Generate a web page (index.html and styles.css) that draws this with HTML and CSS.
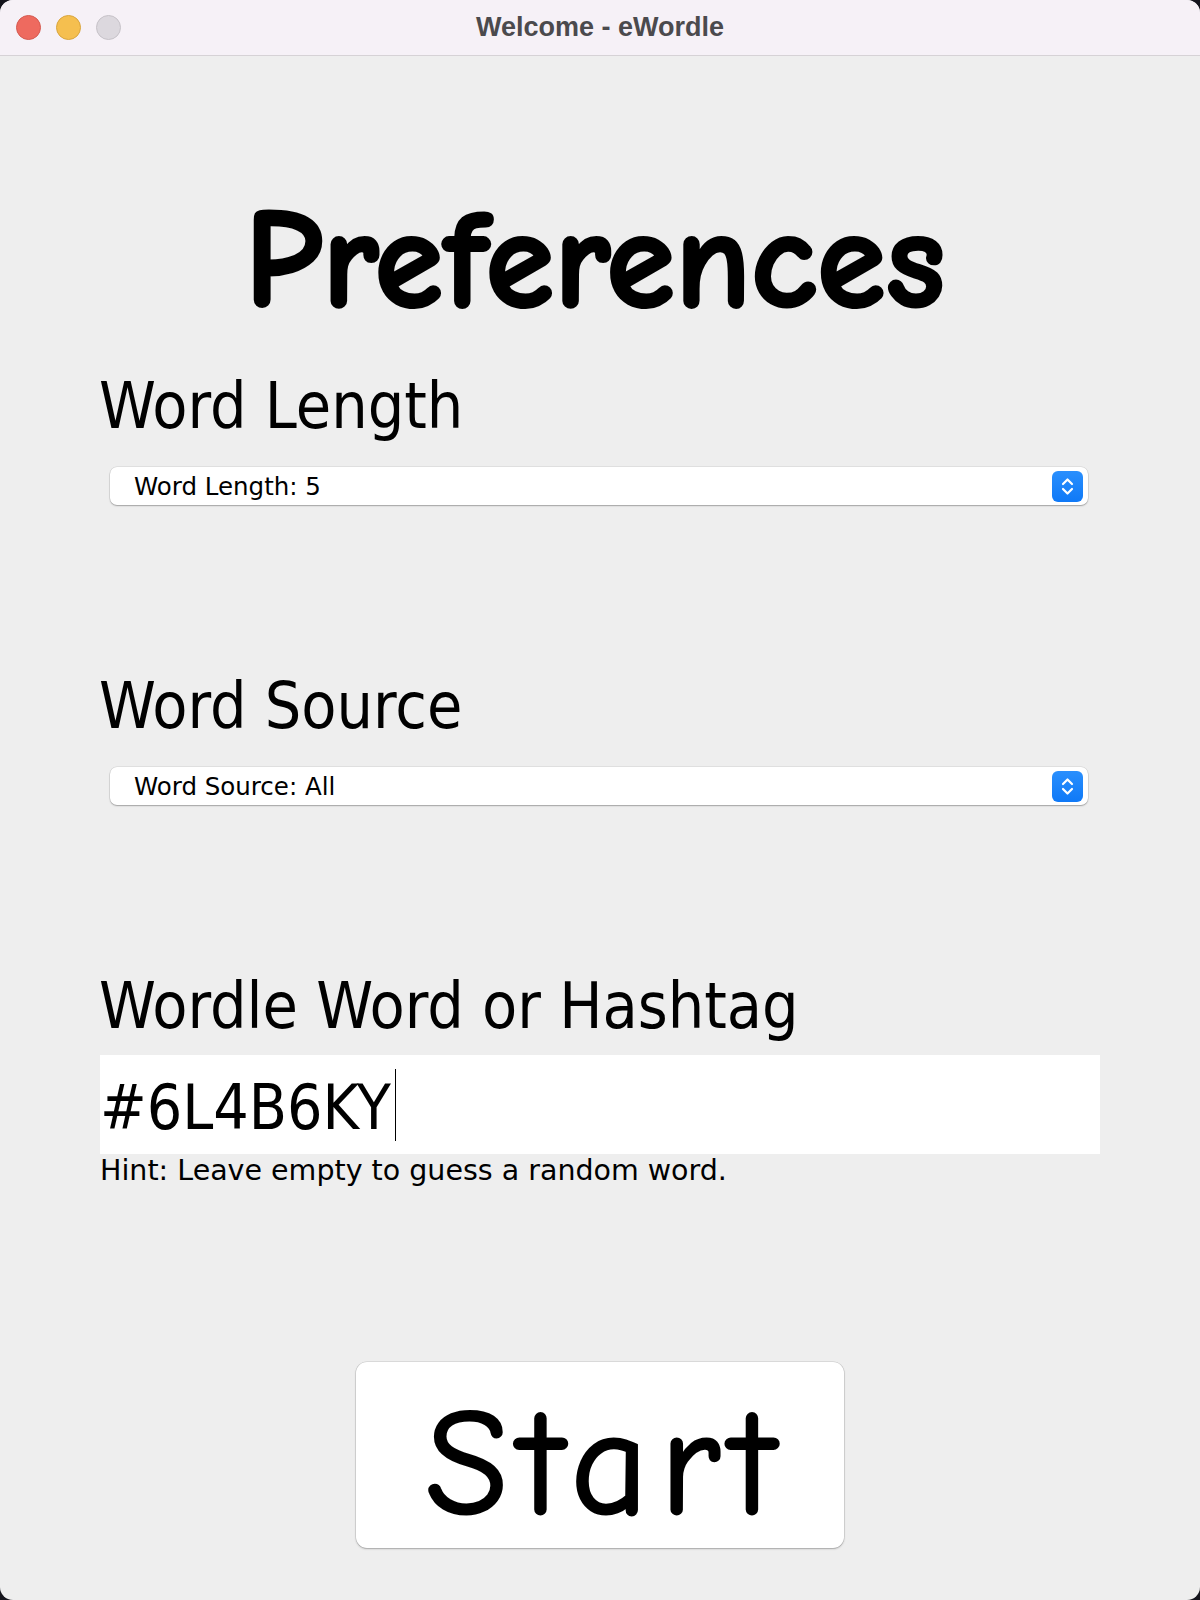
FILE: index.html
```html
<!DOCTYPE html>
<html lang="en">
<head>
<meta charset="utf-8">
<title>Welcome - eWordle</title>
<link rel="stylesheet" href="styles.css">
</head>
<body>
<div class="window">
  <header class="titlebar">
    <div class="lights">
      <span class="light light-red"></span>
      <span class="light light-yellow"></span>
      <span class="light light-gray"></span>
    </div>
    <div class="title">Welcome - eWordle</div>
  </header>
  <main class="content">
    <h1 class="heading">Preferences</h1>

    <section class="group">
      <div class="label">Word Length</div>
      <div class="combo">
        <span class="combo-text">Word Length: 5</span>
        <span class="stepper">
          <svg width="31" height="31" viewBox="0 0 31 31"><path d="M11 13 L15.5 8.5 L20 13 M11 18 L15.5 22.5 L20 18" fill="none" stroke="#fff" stroke-width="2.2" stroke-linecap="round" stroke-linejoin="round"/></svg>
        </span>
      </div>
    </section>

    <section class="group">
      <div class="label">Word Source</div>
      <div class="combo">
        <span class="combo-text">Word Source: All</span>
        <span class="stepper">
          <svg width="31" height="31" viewBox="0 0 31 31"><path d="M11 13 L15.5 8.5 L20 13 M11 18 L15.5 22.5 L20 18" fill="none" stroke="#fff" stroke-width="2.2" stroke-linecap="round" stroke-linejoin="round"/></svg>
        </span>
      </div>
    </section>

    <section class="group group-field">
      <div class="label">Wordle Word or Hashtag</div>
      <div class="field"><span class="field-text">#6L4B6KY</span><span class="caret"></span></div>
      <div class="hint">Hint: Leave empty to guess a random word.</div>
    </section>

    <div class="actions">
      <button class="start">Start</button>
    </div>
  </main>
</div>
</body>
</html>
```

FILE: styles.css
```css
html, body {
  margin: 0;
  padding: 0;
  background: #15151d;
}
.window {
  width: 1200px;
  height: 1600px;
  border-radius: 13px;
  overflow: hidden;
  background: #eeeeee;
  display: flex;
  flex-direction: column;
}
.titlebar {
  height: 55px;
  background: #f6f1f7;
  border-bottom: 1px solid #d6d2d6;
  display: flex;
  align-items: center;
  position: relative;
}
.lights {
  display: flex;
  gap: 15px;
  padding-left: 16px;
}
.light {
  width: 25px;
  height: 25px;
  border-radius: 50%;
  box-sizing: border-box;
}
.light-red { background: #ee6a5f; border: 1px solid #d55a50; }
.light-yellow { background: #f5bf4f; border: 1px solid #d9a53d; }
.light-gray { background: #dcd8de; border: 1px solid #c6c2c8; }
.title {
  position: absolute;
  left: 0;
  right: 0;
  top: 0;
  height: 55px;
  line-height: 55px;
  text-align: center;
  font-family: "Liberation Sans", Arial, sans-serif;
  font-weight: bold;
  font-size: 27px;
  color: #4b4a4d;
}
.content {
  flex: 1;
  padding: 0 100px;
  font-family: "DejaVu Sans Condensed", "DejaVu Sans", sans-serif;
  color: #000;
}
.heading {
  margin: 0 10px 0 0;
  padding: 130px 0 34px;
  line-height: 150px;
  text-align: center;
  font-family: "Comic Sans MS", "Comic Neue", cursive;
  font-weight: bold;
  font-size: 140px;
  -webkit-text-stroke: 3px #000;
}
.label {
  height: 72px;
  line-height: 72px;
  font-size: 64px;
  margin-left: -1px;
}
.combo {
  margin: 25px 12px 0 10px;
  height: 38px;
  background: #fff;
  border-radius: 7px;
  box-shadow: 0 0 0 0.5px rgba(0,0,0,0.12), 0 1px 1.5px rgba(0,0,0,0.28);
  display: flex;
  align-items: center;
  justify-content: space-between;
  padding: 0 5px 0 24px;
}
.combo-text {
  font-family: "DejaVu Sans", sans-serif;
  font-size: 24.5px;
}
.stepper {
  width: 31px;
  height: 31px;
  border-radius: 6px;
  background: linear-gradient(#2a8ffd, #0f79f7);
  display: flex;
}
.group + .group {
  margin-top: 165px;
}
.field {
  margin-top: 13px;
  height: 99px;
  background: #fff;
  display: flex;
  align-items: center;
}
.field-text {
  font-size: 62px;
  line-height: 72px;
  padding-top: 6px;
}
.caret {
  width: 1.5px;
  height: 72px;
  background: #000;
  margin-left: 4px;
}
.hint {
  font-family: "DejaVu Sans", sans-serif;
  font-size: 28.5px;
  line-height: 34px;
}
.actions {
  display: flex;
  justify-content: center;
  margin-top: 174px;
}
.start {
  width: 488px;
  height: 186px;
  background: #fff;
  border: none;
  border-radius: 11px;
  box-shadow: 0 0 0 0.5px rgba(0,0,0,0.15), 0 1px 2px rgba(0,0,0,0.25);
  font-family: "Comic Sans MS", "Comic Neue", cursive;
  font-size: 150px;
  line-height: 186px;
  letter-spacing: 12px;
  color: #000;
  padding: 10px 0 0 12px;
  -webkit-text-stroke: 3px #000;
}
```
